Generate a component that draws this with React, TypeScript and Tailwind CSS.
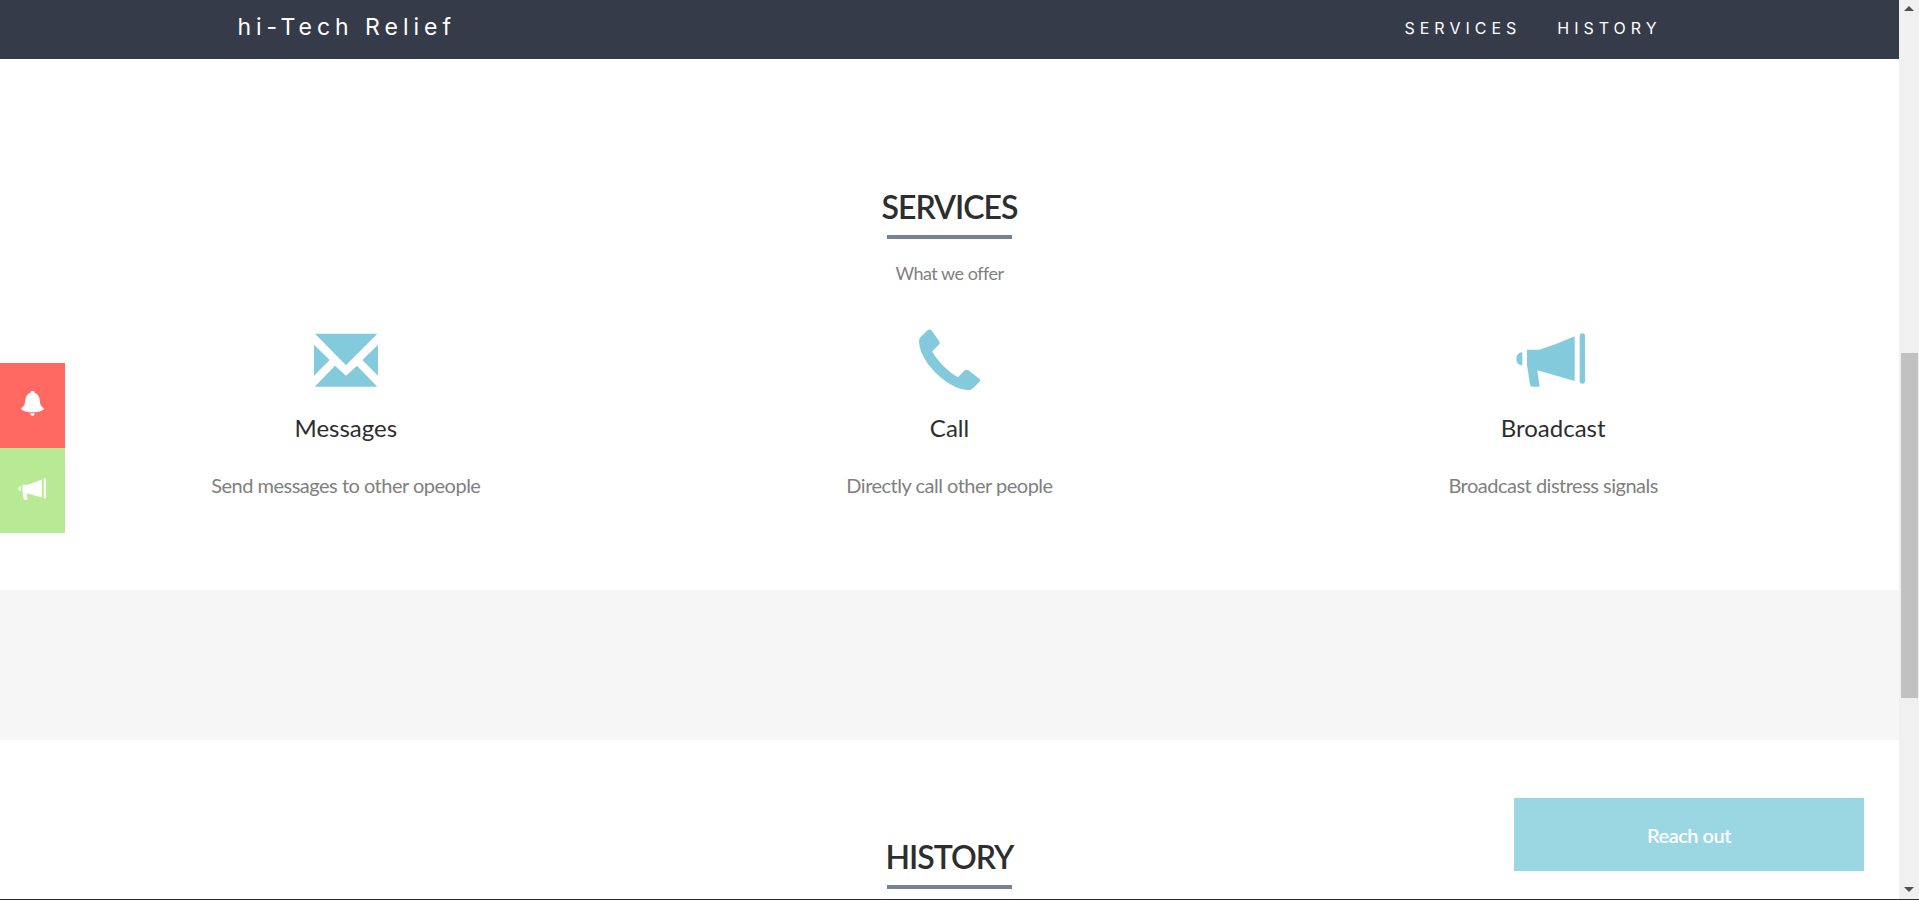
import type { ReactNode } from "react";

function EnvelopeIcon() {
  return (
    <svg viewBox="72 40 192 162" className="h-[54px] w-16" fill="currentColor" aria-hidden="true">
      <path d="M75 42H262L168 137Z" />
      <path d="M72 75L119 121L72 168Z" />
      <path d="M264 75V168L217 121Z" />
      <path d="M74 201L135 138L168 168L201 138L262 201Z" />
    </svg>
  );
}

function PhoneIcon() {
  return (
    <svg viewBox="54 28 188 188" className="size-[62px]" fill="currentColor" aria-hidden="true">
      <path d="M83 32Q90 27 96 33L119 66Q122 71 117 76L97 96C108 119 147 160 175 174L195 154Q201 149 207 153L239 178Q245 183 240 189L219 209Q213 214 202 213C171 209 137 191 106 159C77 130 58 95 57 66Q57 57 61 53Z" />
    </svg>
  );
}

function BullhornIcon({ className }: { className: string }) {
  return (
    <svg viewBox="78 40 222 162" className={className} fill="currentColor" aria-hidden="true">
      <path d="M97 98V137C85 137 79 129 79 118S85 98 97 98Z" />
      <path d="M111 90H148Q200 74 254 50V184L142 152L149 201H127Q121 201 120 195L111 137Z" />
      <rect x="269" y="41" width="16" height="151" rx="8" />
    </svg>
  );
}

function BellIcon() {
  return (
    <svg viewBox="62 122 70 76" className="h-[25px] w-[23px]" fill="currentColor" aria-hidden="true">
      <path d="M91 125Q91 122 97 122T103 125V127C113 130 118 138 119 150C120 163 123 169 131 174V178C123 184 110 187 97 187S71 184 63 178V174C71 169 74 163 75 150C76 138 81 130 91 127Z" />
      <path d="M90 190H104Q103 198 97 198T90 190Z" />
    </svg>
  );
}

function SectionTitle({ children }: { children: ReactNode }) {
  return (
    <div className="flex flex-col items-center">
      <h2 className="text-[32px] leading-10 font-semibold tracking-[-1px] text-[#2e2e2e]">{children}</h2>
      <div className="mt-2 h-1 w-[125px] bg-[#778290]" />
    </div>
  );
}

const services = [
  { title: "Messages", text: "Send messages to other opeople", icon: <EnvelopeIcon /> },
  { title: "Call", text: "Directly call other people", icon: <PhoneIcon /> },
  {
    title: "Broadcast",
    text: "Broadcast distress signals",
    icon: <BullhornIcon className="h-[54px] w-[74px]" />,
  },
];

function ScrollRail() {
  return (
    <div className="flex w-5 shrink-0 flex-col items-center bg-[#f0f0f0]">
      <button type="button" aria-label="Scroll up" className="flex h-4 w-full items-center justify-center">
        <svg viewBox="0 0 10 5" className="h-[5px] w-2.5" fill="#505050" aria-hidden="true">
          <path d="M0 5L5 0L10 5Z" />
        </svg>
      </button>
      <div className="flex w-full flex-1 flex-col px-px">
        <div className="grow-[337]" />
        <div className="ml-px grow-[345] bg-[#c1c1c1]" />
        <div className="grow-[181]" />
      </div>
      <button type="button" aria-label="Scroll down" className="flex h-5 w-full items-center justify-center">
        <svg viewBox="0 0 10 5" className="h-[5px] w-2.5" fill="#505050" aria-hidden="true">
          <path d="M0 0H10L5 5Z" />
        </svg>
      </button>
    </div>
  );
}

export default function App() {
  return (
    <div className="flex h-screen overflow-hidden border-b border-[#2f2d2b] bg-white font-['Lato',sans-serif]">
      <div className="relative flex min-w-0 flex-1 flex-col overflow-hidden">
        <header className="flex shrink-0 items-center justify-between bg-[#363b4a] px-[12.5%] pt-3 pb-4 font-['Inter',sans-serif] text-white">
          <a href="#top" className="text-[23px] leading-[31px] tracking-[5px]">
            hi-Tech Relief
          </a>
          <nav className="flex gap-9 text-base tracking-[5px]">
            <a href="#services">SERVICES</a>
            <a href="#history">HISTORY</a>
          </nav>
        </header>

        <main>
          <section id="services" className="px-11 pt-32 pb-[91px] text-center">
            <SectionTitle>SERVICES</SectionTitle>
            <p className="mt-5 text-lg leading-7 tracking-[-0.5px] text-[#808080]">What we offer</p>
            <div className="mt-[41px] grid grid-cols-3">
              {services.map((service) => (
                <article key={service.title} className="flex flex-col items-center">
                  <div className="flex h-16 items-center text-[#83cbdc]">{service.icon}</div>
                  <h3 className="mt-5 text-2xl leading-8 text-[#2e2e2e]">{service.title}</h3>
                  <p className="mt-[27px] text-xl leading-7 tracking-[-0.5px] text-[#808080]">{service.text}</p>
                </article>
              ))}
            </div>
          </section>

          <div className="h-[150px] bg-[#f6f6f6]" />

          <section id="history" className="px-11 pt-[97px] pb-32">
            <SectionTitle>HISTORY</SectionTitle>
          </section>
        </main>

        <div className="absolute top-[363px] left-0 flex flex-col text-white">
          <button
            type="button"
            aria-label="Alerts"
            className="flex h-[85px] w-[65px] items-center justify-center bg-[#ff6961] pb-1"
          >
            <BellIcon />
          </button>
          <button
            type="button"
            aria-label="Broadcast"
            className="flex h-[85px] w-[65px] items-center justify-center bg-[#b8e994] pb-1"
          >
            <BullhornIcon className="h-[22px] w-[30px]" />
          </button>
        </div>

        <button
          type="button"
          className="absolute right-[35px] bottom-7 h-[73px] w-[350px] bg-[#9ad7e3] text-xl font-semibold tracking-[-0.5px] text-white"
        >
          Reach out
        </button>
      </div>
      <ScrollRail />
    </div>
  );
}
